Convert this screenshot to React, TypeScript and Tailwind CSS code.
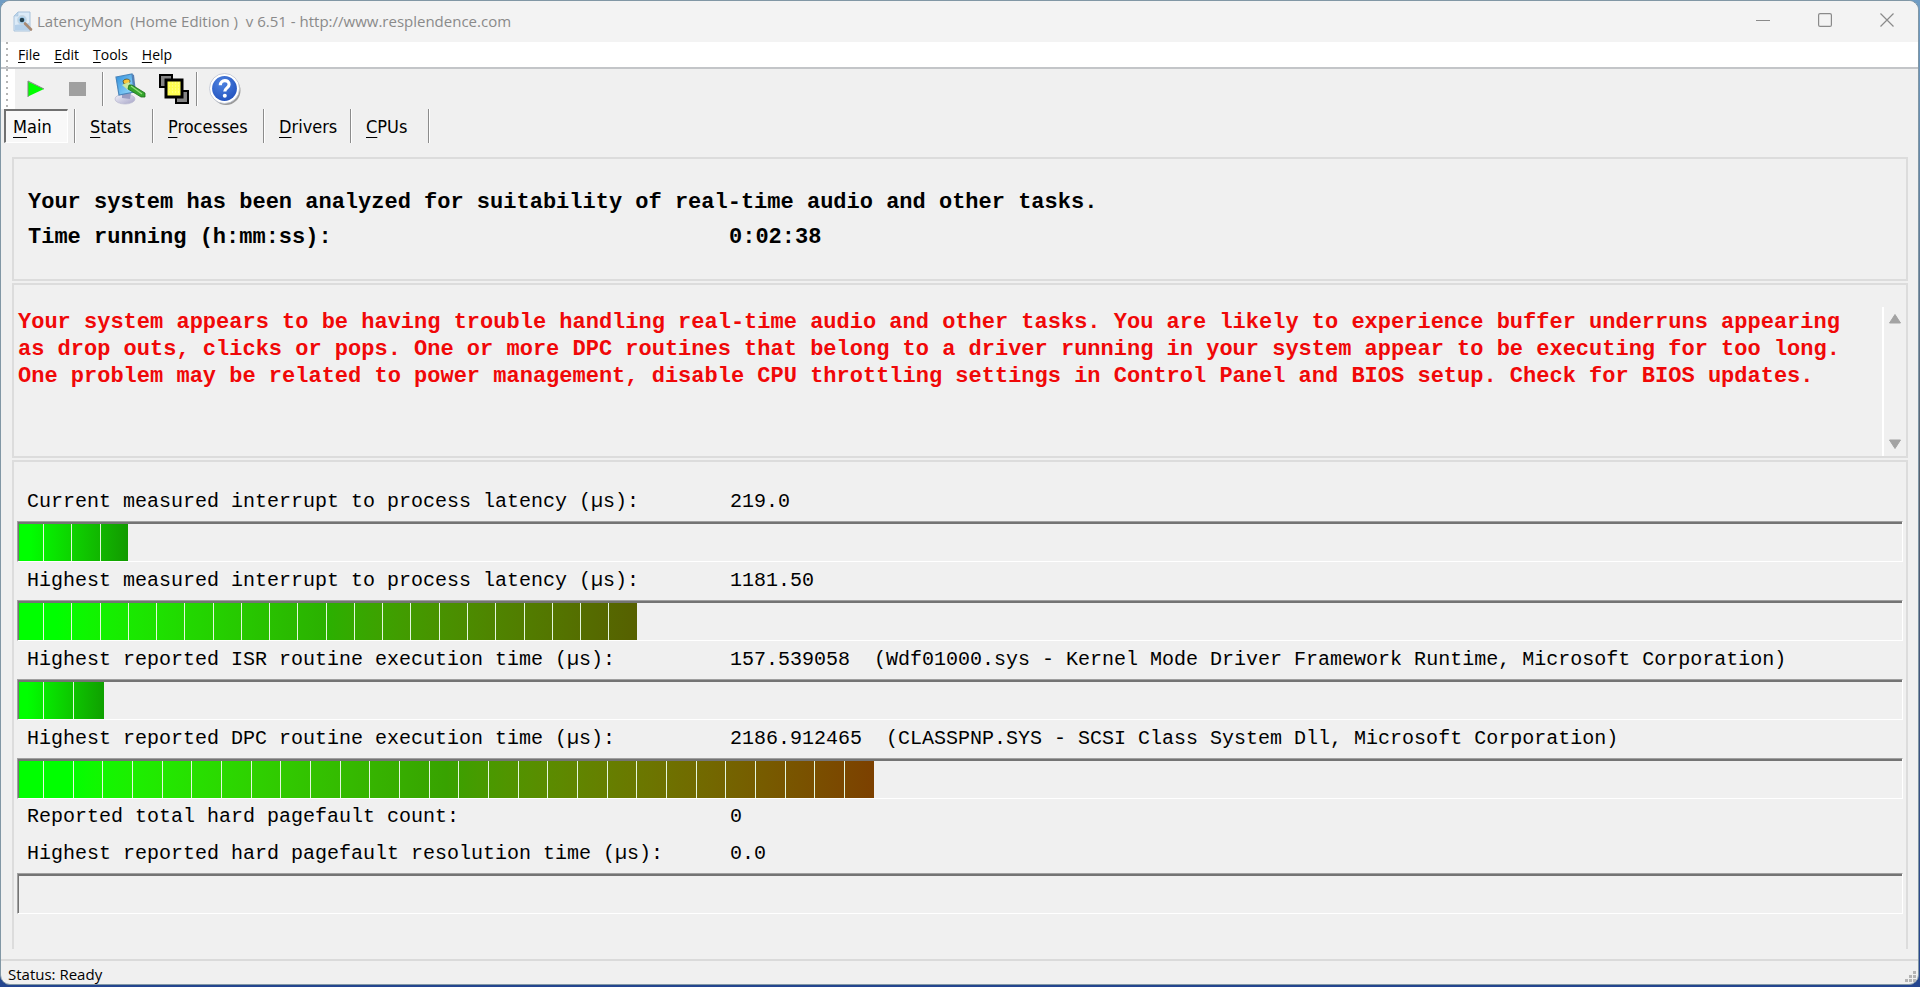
import React from "react";

interface MenuEntry {
  key: string;
  rest: string;
}

interface TabEntry extends MenuEntry {
  width: string;
}

interface Meter {
  segments: number;
  percent: number;
  gradient: string;
}

interface Reading {
  label: string;
  value: string;
  detail?: string;
  meter?: Meter;
}

const menus: MenuEntry[] = [
  { key: "F", rest: "ile" },
  { key: "E", rest: "dit" },
  { key: "T", rest: "ools" },
  { key: "H", rest: "elp" },
];

const tabs: TabEntry[] = [
  { key: "S", rest: "tats", width: "w-[78px]" },
  { key: "P", rest: "rocesses", width: "w-[111px]" },
  { key: "D", rest: "rivers", width: "w-[87px]" },
  { key: "C", rest: "PUs", width: "w-[78px]" },
];

const readings: Reading[] = [
  {
    label: "Current measured interrupt to process latency (µs):",
    value: "219.0",
    meter: {
      segments: 4,
      percent: 5.8,
      gradient: "bg-linear-to-r from-[#00ff00] from-10% to-[#129a00]",
    },
  },
  {
    label: "Highest measured interrupt to process latency (µs):",
    value: "1181.50",
    meter: {
      segments: 22,
      percent: 32.8,
      gradient: "bg-linear-to-r from-[#00ff00] from-6% via-[#2bb000] via-50% to-[#566000]",
    },
  },
  {
    label: "Highest reported ISR routine execution time (µs):",
    value: "157.539058",
    detail: "(Wdf01000.sys - Kernel Mode Driver Framework Runtime, Microsoft Corporation)",
    meter: {
      segments: 3,
      percent: 4.5,
      gradient: "bg-linear-to-r from-[#00ff00] from-10% to-[#0fa000]",
    },
  },
  {
    label: "Highest reported DPC routine execution time (µs):",
    value: "2186.912465",
    detail: "(CLASSPNP.SYS - SCSI Class System Dll, Microsoft Corporation)",
    meter: {
      segments: 29,
      percent: 45.4,
      gradient: "bg-linear-to-r from-[#00ff00] from-6% via-[#38a200] via-50% to-[#7c4000]",
    },
  },
  { label: "Reported total hard pagefault count:", value: "0" },
  {
    label: "Highest reported hard pagefault resolution time (µs):",
    value: "0.0",
    meter: { segments: 0, percent: 0, gradient: "" },
  },
];

const warning =
  "Your system appears to be having trouble handling real-time audio and other tasks. You are likely to experience buffer underruns appearing as drop outs, clicks or pops. One or more DPC routines that belong to a driver running in your system appear to be executing for too long. One problem may be related to power management, disable CPU throttling settings in Control Panel and BIOS setup. Check for BIOS updates.";

const AppIcon = () => (
  <svg width="20" height="22" viewBox="0 0 20 22" aria-hidden="true">
    <path d="M5 1h12v19H1V5z" fill="#dcebf8" stroke="#a9c3dc" />
    <path d="M1 5l4-4v4z" fill="#b9d3ea" stroke="#a9c3dc" strokeWidth="0.6" />
    <path d="M2 14l14-2v7H2z" fill="#b5d0ea" />
    <circle cx="9" cy="9" r="4.2" fill="#a8d0ee" stroke="#c7d6e2" strokeWidth="1.4" />
    <circle cx="9" cy="9" r="2.3" fill="#24404e" />
    <path d="M12 12.5l6 6" stroke="#a88a74" strokeWidth="2.6" strokeLinecap="round" />
  </svg>
);

const PlayIcon = () => (
  <svg width="18" height="18" viewBox="0 0 18 18" aria-hidden="true">
    <path d="M1 1.5v15L17 9z" fill="#00ff00" />
    <path d="M1 17V1l16 8" fill="none" stroke="#7d867d" strokeWidth="1" />
  </svg>
);

const OptionsIcon = () => (
  <svg width="32" height="32" viewBox="0 0 32 32" aria-hidden="true">
    <defs>
      <linearGradient id="screen" x1="0" y1="0" x2="1" y2="1">
        <stop offset="0" stopColor="#2f8fdc" />
        <stop offset="1" stopColor="#9fe0ff" />
      </linearGradient>
      <linearGradient id="foot" x1="0" y1="0" x2="1" y2="1">
        <stop offset="0" stopColor="#f4f4fb" />
        <stop offset="1" stopColor="#a5a3c6" />
      </linearGradient>
    </defs>
    <ellipse cx="11" cy="26" rx="10" ry="5" fill="url(#foot)" stroke="#b9b9d0" strokeWidth="0.7" />
    <path d="M8 19l9 1-1 6-8-1z" fill="#9a9cc2" />
    <path d="M2 4l16-3 2 18-15 3z" fill="url(#screen)" stroke="#4b86bb" strokeWidth="1.2" />
    <path d="M18 1l2 1 2 17-2 1z" fill="#557fb4" />
    <path d="M9 8c2-3 7-2 7 0s-3 4-6 3z" fill="#f6c43a" stroke="#4d4a2a" strokeWidth="0.8" />
    <path d="M8 12l7-3 3 5-4 3z" fill="#c9e8a0" />
    <path d="M15 12l3 0 13 8v4l-4 0-13-8z" fill="#35a52c" stroke="#1d6b1b" strokeWidth="0.8" />
    <path d="M17 13l11 8" stroke="#93de7c" strokeWidth="1.2" />
  </svg>
);

const WindowsIcon = () => (
  <svg width="32" height="32" viewBox="0 0 32 32" aria-hidden="true">
    <rect x="2" y="2" width="12" height="12" fill="#848484" stroke="#000" strokeWidth="2" />
    <rect x="18" y="18" width="12" height="12" fill="#848484" stroke="#000" strokeWidth="2" />
    <rect x="8" y="7" width="16" height="17" fill="#ffff52" stroke="#000" strokeWidth="3" />
    <path
      d="M11 10h10M11 13h10M11 16h10M11 19h10"
      stroke="#fffcae"
      strokeWidth="1"
      strokeDasharray="1 2"
    />
  </svg>
);

const HelpIcon = () => (
  <svg width="34" height="34" viewBox="0 0 34 34" aria-hidden="true">
    <defs>
      <radialGradient id="ball" cx="0.4" cy="0.3" r="0.8">
        <stop offset="0" stopColor="#4f83e0" />
        <stop offset="1" stopColor="#1f4fbc" />
      </radialGradient>
    </defs>
    <circle cx="18" cy="18.5" r="14.5" fill="#9a9a9a" />
    <circle cx="16.5" cy="16.5" r="15" fill="#fff" stroke="#bcc3d0" strokeWidth="0.8" />
    <circle cx="16.5" cy="16.5" r="12.4" fill="url(#ball)" />
    <path
      d="M12.3 13.2c0-6 9-6 8.800-.6 0 3.200-4.300 3.400-4.300 7"
      fill="none"
      stroke="#fff"
      strokeWidth="3.200"
    />
    <circle cx="16.800" cy="23.800" r="2" fill="#fff" />
  </svg>
);

const Separator = () => (
  <div className="w-[2px] shrink-0 self-stretch border-l border-[#8c8c8c] bg-white" />
);

const Grip = () => (
  <div className="flex w-[14px] shrink-0 self-stretch bg-white pl-[5px]">
    <div className="w-[2px] bg-[repeating-linear-gradient(to_bottom,#b4b4b4_0px,#b4b4b4_2px,transparent_2px,transparent_6px)]" />
  </div>
);

const MeterBar: React.FC<{ label: string; meter: Meter }> = ({ label, meter }) => (
  <div
    role="progressbar"
    aria-label={label}
    aria-valuenow={meter.percent}
    className="h-[41px] border border-t-[#a0a0a0] border-r-white border-b-white border-l-[#a0a0a0]"
  >
    <div className="h-full border-t-2 border-l border-[#747474]">
      <div
        className={`flex h-full ${meter.gradient}`}
        style={{ width: `${meter.percent}%` }}
      >
        {Array.from({ length: meter.segments }, (_, i) => (
          <div
            key={i}
            className="flex-1 border-r border-[#e4f7de] first:w-[25px] first:flex-none last:border-r-0"
          />
        ))}
      </div>
    </div>
  </div>
);

const App: React.FC = () => {
  return (
    <div className="flex min-h-screen flex-col bg-linear-to-b from-[#6f9cc4] via-[#56606e] to-[#24458f] pr-px pb-[2px] text-black">
      <div className="flex flex-1 flex-col overflow-hidden rounded-[10px] border border-[#8197a5] bg-[#f0f0f0] font-['Open_Sans',sans-serif]">
        <header className="flex h-[41px] items-center bg-[#f3f3f3] pl-[12px]">
          <AppIcon />
          <h1 className="ml-[4px] flex-1 text-[15px] whitespace-pre text-[#8a8a8a]">
            {"LatencyMon  (Home Edition )  v 6.51 - http://www.resplendence.com"}
          </h1>
          <div className="flex h-[38px] self-start text-[#8a8a8a]">
            <button aria-label="Minimize" className="grid w-[62px] place-items-center">
              <svg width="14" height="14" viewBox="0 0 14 14">
                <path d="M0 7.500h14" stroke="currentColor" />
              </svg>
            </button>
            <button aria-label="Maximize" className="grid w-[62px] place-items-center">
              <svg width="14" height="14" viewBox="0 0 14 14">
                <rect x="0.600" y="0.600" width="12.800" height="12.800" rx="1.500" fill="none" stroke="currentColor" strokeWidth="1.200" />
              </svg>
            </button>
            <button aria-label="Close" className="grid w-[62px] place-items-center">
              <svg width="14" height="14" viewBox="0 0 14 14">
                <path d="M0.500 0.500l13 13M13.500 0.500l-13 13" stroke="currentColor" strokeWidth="1.200" />
              </svg>
            </button>
          </div>
        </header>

        <nav className="flex h-[27px] items-center border-b-2 border-[#c3c5c8] bg-white">
          <Grip />
          <div className="flex gap-[14px] pl-[3px] text-[14px] leading-[25px]">
            {menus.map((menu) => (
              <button key={menu.key}>
                <span className="underline underline-offset-2">{menu.key}</span>
                {menu.rest}
              </button>
            ))}
          </div>
        </nav>

        <div className="flex h-[40px] items-center">
          <Grip />
          <button aria-label="Start" className="ml-[12px]">
            <PlayIcon />
          </button>
          <button aria-label="Stop" className="ml-[24px] h-[14px] w-[17px] bg-[#a0a0a0]" />
          <div className="ml-[16px] flex h-[34px]">
            <Separator />
          </div>
          <button aria-label="Options" className="ml-[10px]">
            <OptionsIcon />
          </button>
          <button aria-label="Windows" className="ml-[12px]">
            <WindowsIcon />
          </button>
          <div className="ml-[6px] flex h-[34px]">
            <Separator />
          </div>
          <button aria-label="Help" className="ml-[10px]">
            <HelpIcon />
          </button>
        </div>

        <div role="tablist" className="flex h-[34px] pl-[3px] font-['DejaVu_Sans_Condensed','Open_Sans',sans-serif] text-[18px]">
          <button
            role="tab"
            aria-selected="true"
            className="mr-[6px] w-[64px] border-t-2 border-r border-b border-l-2 border-t-[#707070] border-r-white border-b-white border-l-[#707070] bg-[#f8f8f8] pl-[7px] text-left"
          >
            <span className="underline underline-offset-4">M</span>ain
          </button>
          <Separator />
          {tabs.map((tab) => (
            <div key={tab.key} className={`flex ${tab.width}`}>
              <button role="tab" aria-selected="false" className="flex-1 pl-[14px] text-left">
                <span className="underline underline-offset-4">{tab.key}</span>
                {tab.rest}
              </button>
              <Separator />
            </div>
          ))}
        </div>

        <main className="mt-[14px] flex flex-1 flex-col gap-[2px] pr-[10px] pl-[11px] font-['Liberation_Mono',monospace]">
          <section className="border-2 border-[#dcdcdc] px-[14px] pt-[26px] pb-[24px] text-[22px] leading-[35px] font-bold">
            <p>Your system has been analyzed for suitability of real-time audio and other tasks.</p>
            <div className="flex">
              <span className="w-[701px]">Time running (h:mm:ss):</span>
              <span>0:02:38</span>
            </div>
          </section>

          <section className="flex h-[175px] border-2 border-[#dcdcdc] pt-[22px]">
            <textarea
              readOnly
              aria-label="Analysis"
              value={warning}
              className="flex-1 resize-none overflow-hidden bg-transparent pt-[2px] pr-[30px] pl-[4px] text-[22px] leading-[27px] font-bold text-[#f00808] outline-none"
            />
            <div className="flex w-[24px] flex-col items-center justify-between border-l-2 border-white py-[7px]">
              <button aria-label="Scroll up">
                <svg width="12" height="10" viewBox="0 0 12 10">
                  <path d="M6 0.500l5.500 8.500H0.500z" fill="#a3a3a3" stroke="#a3a3a3" strokeLinejoin="round" />
                </svg>
              </button>
              <button aria-label="Scroll down">
                <svg width="12" height="10" viewBox="0 0 12 10">
                  <path d="M6 9.500l5.500-8.500H0.500z" fill="#a3a3a3" stroke="#a3a3a3" strokeLinejoin="round" />
                </svg>
              </button>
            </div>
          </section>

          <section className="mb-[10px] flex-1 border-2 border-b-0 border-[#dcdcdc] px-[3px] pt-[21px] text-[20px]">
            {readings.map((reading) => (
              <div key={reading.label}>
                <div className={`flex items-center pl-[10px] whitespace-pre ${reading.meter ? "h-[38px]" : "h-[36px]"}`}>
                  <span className="w-[703px]">{reading.label}</span>
                  <span>{reading.value}</span>
                  {reading.detail && <span>{"  " + reading.detail}</span>}
                </div>
                {reading.meter && <MeterBar label={reading.label} meter={reading.meter} />}
              </div>
            ))}
          </section>
        </main>

        <footer className="flex h-[25px] items-center justify-between border-t-2 border-[#dadada] pl-[7px] text-[15px]">
          <span className="pt-[3px]">Status: Ready</span>
          <svg width="14" height="14" viewBox="0 0 14 14" fill="#b4b4b4" className="self-end" aria-hidden="true">
            <path d="M9 1h3v3h-3zM5 5h3v3h-3zM9 5h3v3h-3zM1 9h3v3h-3zM5 9h3v3h-3zM9 9h3v3h-3z" />
          </svg>
        </footer>
      </div>
    </div>
  );
};

export default App;
